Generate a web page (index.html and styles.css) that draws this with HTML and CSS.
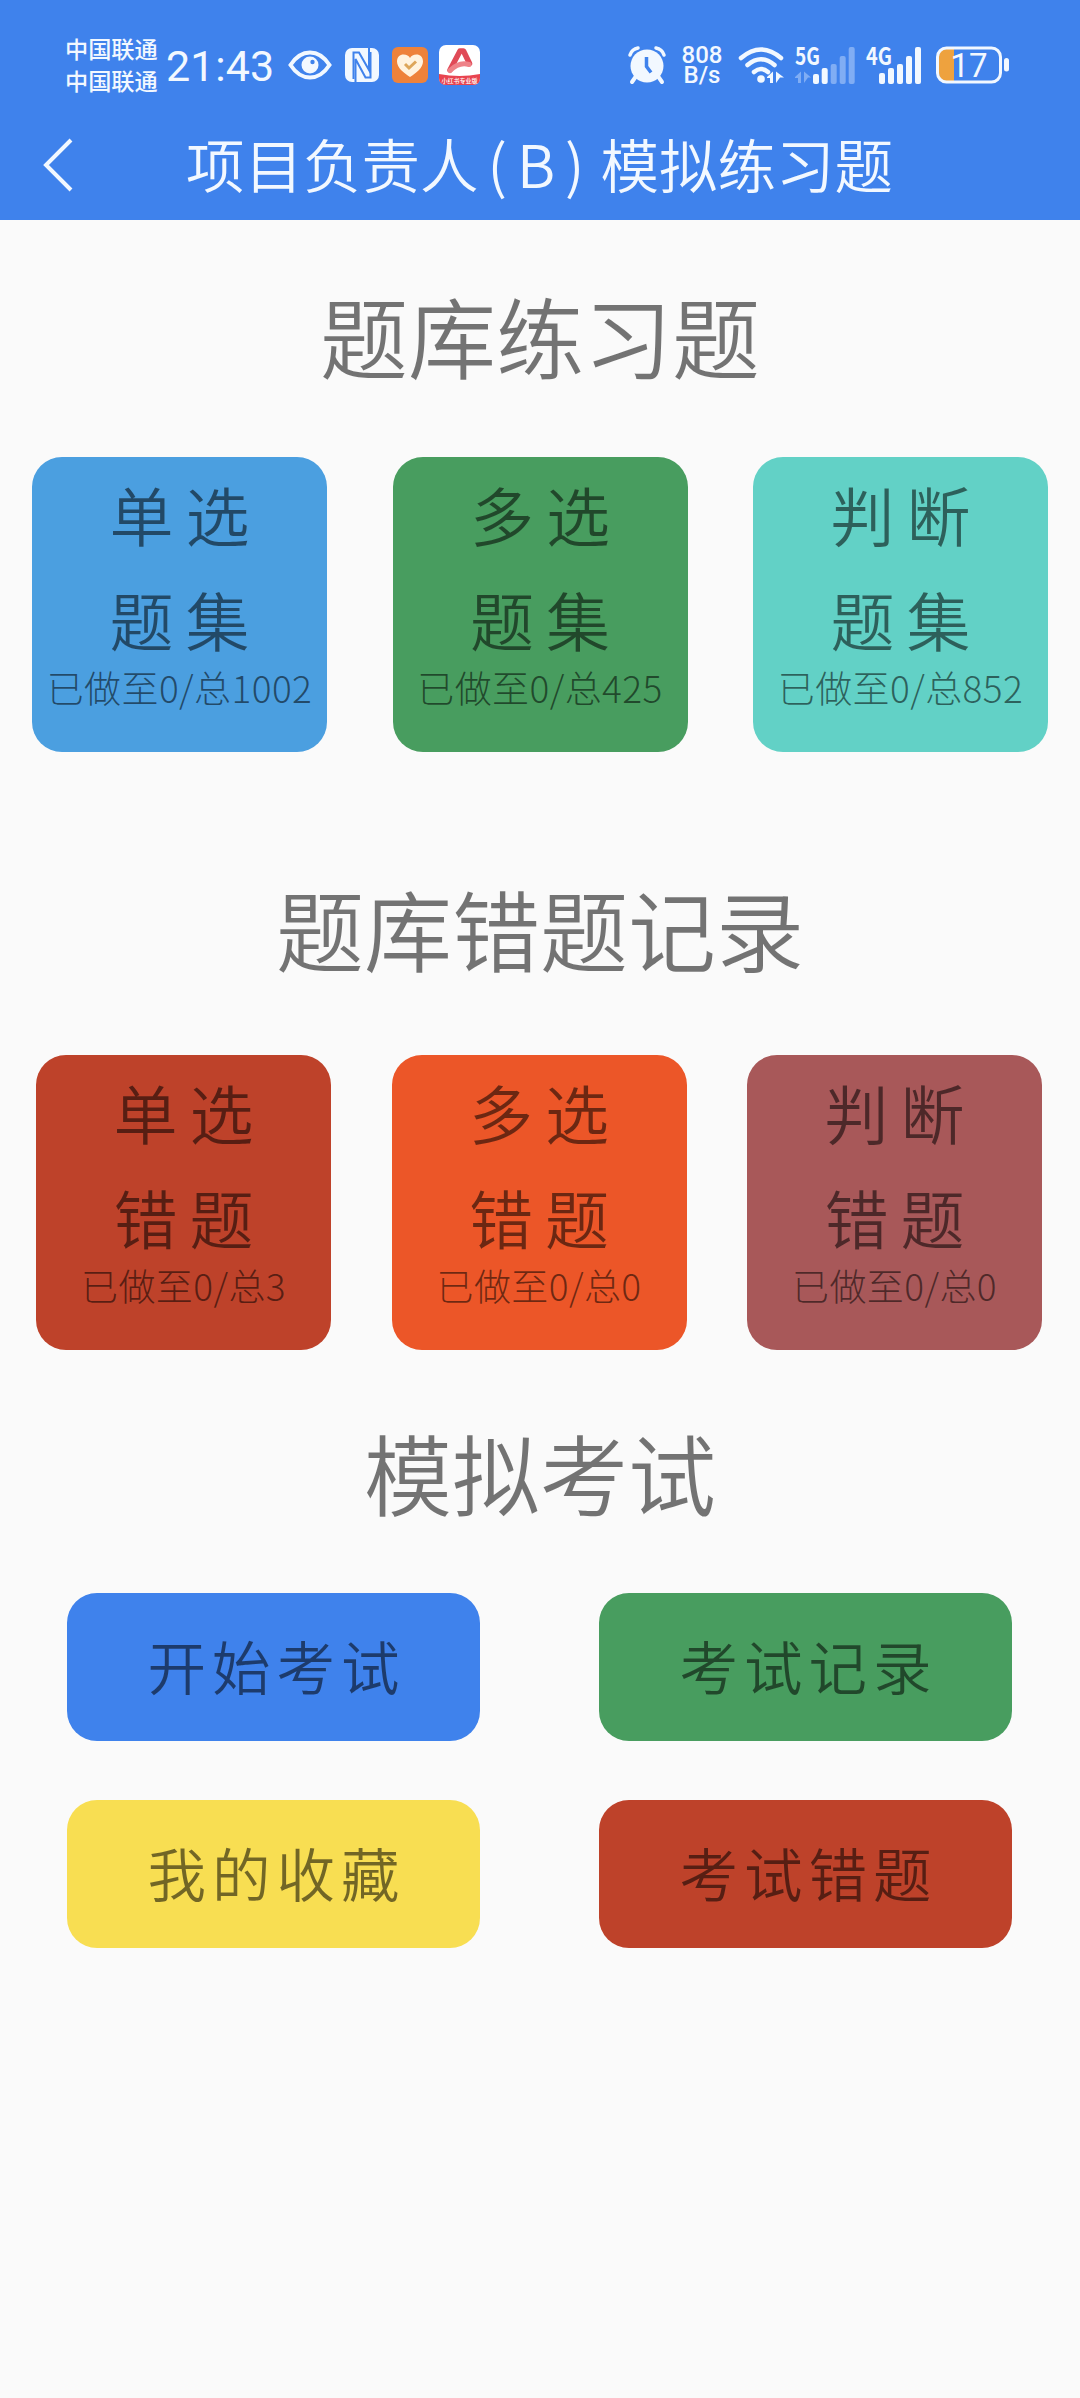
FILE: index.html
```html
<!DOCTYPE html>
<html lang="zh-CN">
<head>
    <meta charset="UTF-8">
    <meta name="viewport" content="width=device-width, initial-scale=1.0">
    <title>项目负责人(B)模拟练习题</title>
    <link rel="stylesheet" href="styles.css">
</head>
<body>

<header class="header">
    <div class="status-bar">
        <div class="status-left">
            <div class="carrier">
                <span>中国联通</span>
                <span>中国联通</span>
            </div>
            <div class="time">21<span class="colon">:</span>43</div>
            <svg class="icon-eye" width="44" height="30" viewBox="0 0 44 30">
                <path d="M2.5 15C8 6.5 14 2.5 22 2.5S36 6.500 41.500 15C36 23.500 30 27.500 22 27.500S8 23.500 2.500 15Z" fill="none" stroke="#f2f8ff" stroke-width="4"/>
                <circle cx="22" cy="15" r="8.500" fill="#f2f8ff"/>
                <circle cx="24.500" cy="12" r="2.200" fill="#3f82ec"/>
            </svg>
            <svg class="icon-nfc" width="34" height="34" viewBox="0 0 34 34">
                <rect width="34" height="34" rx="7" fill="#f2f8ff"/>
                <path d="M8.500 31V4.500L14 4.500L24 22V0" fill="none" stroke="#3f82ec" stroke-width="2"/>
                <path d="M10.500 34V11L20.500 29.500H25.500V4" fill="none" stroke="#3f82ec" stroke-width="2"/>
            </svg>
            <svg class="icon-heart" width="36" height="36" viewBox="0 0 36 36">
                <rect width="36" height="36" rx="6" fill="#ee823b"/>
                <path d="M18 30C12 26 5 21 5 14.500C5 10 8 7.500 11.500 7.500C14.500 7.500 17 9 18 11C19 9 21.500 7.500 24.500 7.500C28 7.500 31 10 31 14.500C31 21 24 26 18 30Z" fill="#fff3df"/>
                <path d="M13 17L17 21L24 14.500" fill="none" stroke="#dda65a" stroke-width="3"/>
            </svg>
            <svg class="icon-app" width="41" height="40" viewBox="0 0 41 40">
                <rect width="41" height="40" rx="7" fill="#fff"/>
                <path d="M0 29Q20.500 33 41 29V33Q41 40 34 40H7Q0 40 0 33Z" fill="#e8434f"/>
                <path d="M11 25L21 6H24.500L30.500 18.500" fill="none" stroke="#e04a57" stroke-width="5.500" stroke-linejoin="round" stroke-linecap="round"/>
                <path d="M11 25.500Q20 16.500 30 19.500" fill="none" stroke="#ee8288" stroke-width="5" stroke-linecap="round"/>
                <text x="20.500" y="38" text-anchor="middle" class="app-label">小红书专业版</text>
            </svg>
        </div>
        <div class="status-right">
            <svg class="icon-alarm" width="38" height="38" viewBox="0 0 38 38">
                <circle cx="19" cy="20" r="16.500" fill="#f2f8ff"/>
                <path d="M2 9Q4 3 10 2M36 9Q34 3 28 2" fill="none" stroke="#f2f8ff" stroke-width="3.500" stroke-linecap="round"/>
                <path d="M7.500 31L4 36M30.500 31L34 36" stroke="#f2f8ff" stroke-width="4" stroke-linecap="round"/>
                <path d="M18.500 11V20.500L23 26.500" fill="none" stroke="#3f82ec" stroke-width="3.500"/>
            </svg>
            <div class="speed">
                <span>808</span>
                <span>B/s</span>
            </div>
            <svg class="icon-wifi" width="46" height="38" viewBox="0 0 46 38">
                <g fill="none" stroke="#f2f8ff" stroke-width="4.500" stroke-linecap="round">
                    <path d="M3 12Q23 -5 43 12"/>
                    <path d="M9.500 19Q23 7.500 36.500 19"/>
                    <path d="M16 26Q23 20 30 26"/>
                </g>
                <circle cx="23" cy="33" r="3.800" fill="#f2f8ff"/>
                <path d="M29 31L35 25.500V37H32V32H29ZM38 25.500L46 31.500H42L38 37Z" fill="#f2f8ff"/>
            </svg>
            <svg class="icon-signal-5g" width="61" height="38" viewBox="0 0 61 38">
                <text x="0" y="18.500" class="net-label" textLength="25" lengthAdjust="spacingAndGlyphs">5G</text>
                <g fill="#80adf4">
                    <path d="M0 31L6 25.500V37H3V32H0ZM9 25.500L16 31.500H13L9 37Z"/>
                    <rect x="35.700" y="18" width="6" height="20" rx="2"/>
                    <rect x="44.700" y="10" width="6" height="28" rx="2"/>
                    <rect x="53.700" y="1" width="6" height="37" rx="2"/>
                </g>
                <g fill="#f2f8ff">
                    <rect x="18" y="28" width="6" height="10" rx="2"/>
                    <rect x="26.700" y="22" width="6" height="16" rx="2"/>
                </g>
            </svg>
            <svg class="icon-signal-4g" width="56" height="38" viewBox="0 0 56 38">
                <text x="0" y="18.500" class="net-label" textLength="26" lengthAdjust="spacingAndGlyphs">4G</text>
                <g fill="#f2f8ff">
                    <rect x="13" y="27" width="6" height="11" rx="2"/>
                    <rect x="22" y="22" width="6" height="16" rx="2"/>
                    <rect x="31" y="18" width="6" height="20" rx="2"/>
                    <rect x="40" y="10" width="6" height="28" rx="2"/>
                    <rect x="49" y="1" width="6" height="37" rx="2"/>
                </g>
            </svg>
            <svg class="icon-battery" width="74" height="38" viewBox="0 0 74 38">
                <path d="M18 3V35H11Q3 35 3 27V11Q3 3 11 3Z" fill="#eea23e"/>
                <rect x="1.500" y="2" width="63" height="34" rx="9" fill="none" stroke="#f2f8ff" stroke-width="3"/>
                <rect x="68" y="12" width="5" height="13.500" rx="2.500" fill="#f2f8ff"/>
                <text x="33" y="30.500" text-anchor="middle" class="battery-label">17</text>
            </svg>
        </div>
    </div>
    <div class="nav-bar">
        <svg class="back" width="32" height="56" viewBox="0 0 32 56">
            <path d="M29 3L4 28L29 53" fill="none" stroke="#f2f8ff" stroke-width="4"/>
        </svg>
        <h1 class="title">项目负责人<span class="paren">(B)</span>模拟练习题</h1>
    </div>
</header>

<main class="content">
    <h2>题库练习题</h2>
    <div class="cards practice">
        <div class="card blue">
            <div class="card-name">单选</div>
            <div class="card-name">题集</div>
            <div class="progress">已做至0/总1002</div>
        </div>
        <div class="card green">
            <div class="card-name">多选</div>
            <div class="card-name">题集</div>
            <div class="progress">已做至0/总425</div>
        </div>
        <div class="card teal">
            <div class="card-name">判断</div>
            <div class="card-name">题集</div>
            <div class="progress">已做至0/总852</div>
        </div>
    </div>

    <h2>题库错题记录</h2>
    <div class="cards wrong">
        <div class="card red">
            <div class="card-name">单选</div>
            <div class="card-name">错题</div>
            <div class="progress">已做至0/总3</div>
        </div>
        <div class="card orange">
            <div class="card-name">多选</div>
            <div class="card-name">错题</div>
            <div class="progress">已做至0/总0</div>
        </div>
        <div class="card mauve">
            <div class="card-name">判断</div>
            <div class="card-name">错题</div>
            <div class="progress">已做至0/总0</div>
        </div>
    </div>

    <h2>模拟考试</h2>
    <div class="exam">
        <button class="exam-btn royal">开始考试</button>
        <button class="exam-btn green">考试记录</button>
        <button class="exam-btn yellow">我的收藏</button>
        <button class="exam-btn red">考试错题</button>
    </div>
</main>

</body>
</html>
```
FILE: styles.css
```css
* {
    box-sizing: border-box;
}

body {
    margin: 0;
    min-height: 2398px;
    background-color: #fafafa;
    color: rgba(0, 0, 0, 0.54);
    font-family: "Noto Sans CJK SC", sans-serif;
    font-weight: 300;
}

svg {
    overflow: visible;
}

.header {
    height: 220px;
    background-color: #3f82ec;
    color: #f2f8ff;
}

/* status bar */
.status-bar {
    display: flex;
    justify-content: space-between;
    height: 130px;
    padding: 0 70px 0 65px;
}

.status-left,
.status-right {
    display: flex;
    align-items: center;
}

.carrier {
    display: flex;
    flex-direction: column;
    width: 94px;
    padding-bottom: 2px;
    font-size: 23.2px;
    font-weight: 500;
    line-height: 32px;
    white-space: nowrap;
}

.time {
    width: 122px;
    padding: 2px 0 0 7px;
    font-family: Roboto, sans-serif;
    font-size: 43px;
    font-weight: 400;
    line-height: 60px;
    white-space: nowrap;
}

.colon {
    padding: 0 0 0 1px;
}

.icon-eye {
    margin-left: 7px;
}

.icon-nfc {
    margin-left: 13px;
}

.icon-heart {
    margin-left: 13px;
}

.icon-app {
    margin-left: 11px;
}

.app-label {
    font-size: 6px;
    font-weight: 500;
    fill: #fff;
}

.speed {
    display: flex;
    flex-direction: column;
    width: 44px;
    margin: 0 14px 0 14px;
    font-family: Roboto, sans-serif;
    font-size: 24px;
    font-weight: 500;
    line-height: 20px;
    text-align: center;
}

.icon-signal-5g {
    margin-left: 11px;
}

.icon-signal-4g {
    margin-left: 10px;
}

.icon-battery {
    margin-left: 14px;
}

.net-label {
    font-size: 24px;
    font-weight: 700;
    fill: #f2f8ff;
}

.battery-label {
    font-family: Roboto, sans-serif;
    font-size: 33px;
    font-weight: 400;
    fill: #f2f8ff;
}

/* title bar */
.nav-bar {
    display: flex;
    align-items: center;
    height: 70px;
    padding-left: 42px;
}

.title {
    margin: 0 0 0 112px;
    padding-bottom: 5px;
    font-size: 58.5px;
    font-weight: 350;
    line-height: 70px;
    white-space: nowrap;
}

.paren {
    display: inline-block;
    width: 122px;
    padding-left: 9px;
    letter-spacing: 10px;
}

/* sections */
.content {
    padding-top: 49px;
}

h2 {
    margin: 0;
    font-size: 88px;
    font-weight: 350;
    line-height: 130px;
    text-align: center;
}

.cards {
    display: flex;
    justify-content: space-between;
}

.practice {
    margin: 58px 32px 110px;
}

.wrong {
    margin: 63px 38px 56px 36px;
}

.card {
    width: 295px;
    height: 295px;
    padding-top: 4px;
    border-radius: 30px;
    text-align: center;
}

.card-name {
    padding-left: 12px;
    font-size: 64px;
    font-weight: 350;
    line-height: 104.5px;
    letter-spacing: 12px;
}

.progress {
    margin-top: -7px;
    font-size: 37px;
    line-height: 48px;
    letter-spacing: 0.4px;
    white-space: nowrap;
}

.exam {
    display: grid;
    grid-template-columns: 413px 413px;
    justify-content: space-between;
    row-gap: 59px;
    margin: 57px 68px 0 67px;
}

.exam-btn {
    height: 148px;
    padding: 0 0 5px 6px;
    border: none;
    border-radius: 30px;
    color: inherit;
    font-family: inherit;
    font-size: 58.5px;
    font-weight: 350;
    letter-spacing: 6px;
}

.blue {
    background-color: #4b9fe0;
}

.green {
    background-color: #489d5f;
}

.teal {
    background-color: #62d1c6;
}

.red {
    background-color: #be422a;
}

.orange {
    background-color: #ec5628;
}

.mauve {
    background-color: #a85859;
}

.royal {
    background-color: #3f82ec;
}

.yellow {
    background-color: #f8de52;
}
```
